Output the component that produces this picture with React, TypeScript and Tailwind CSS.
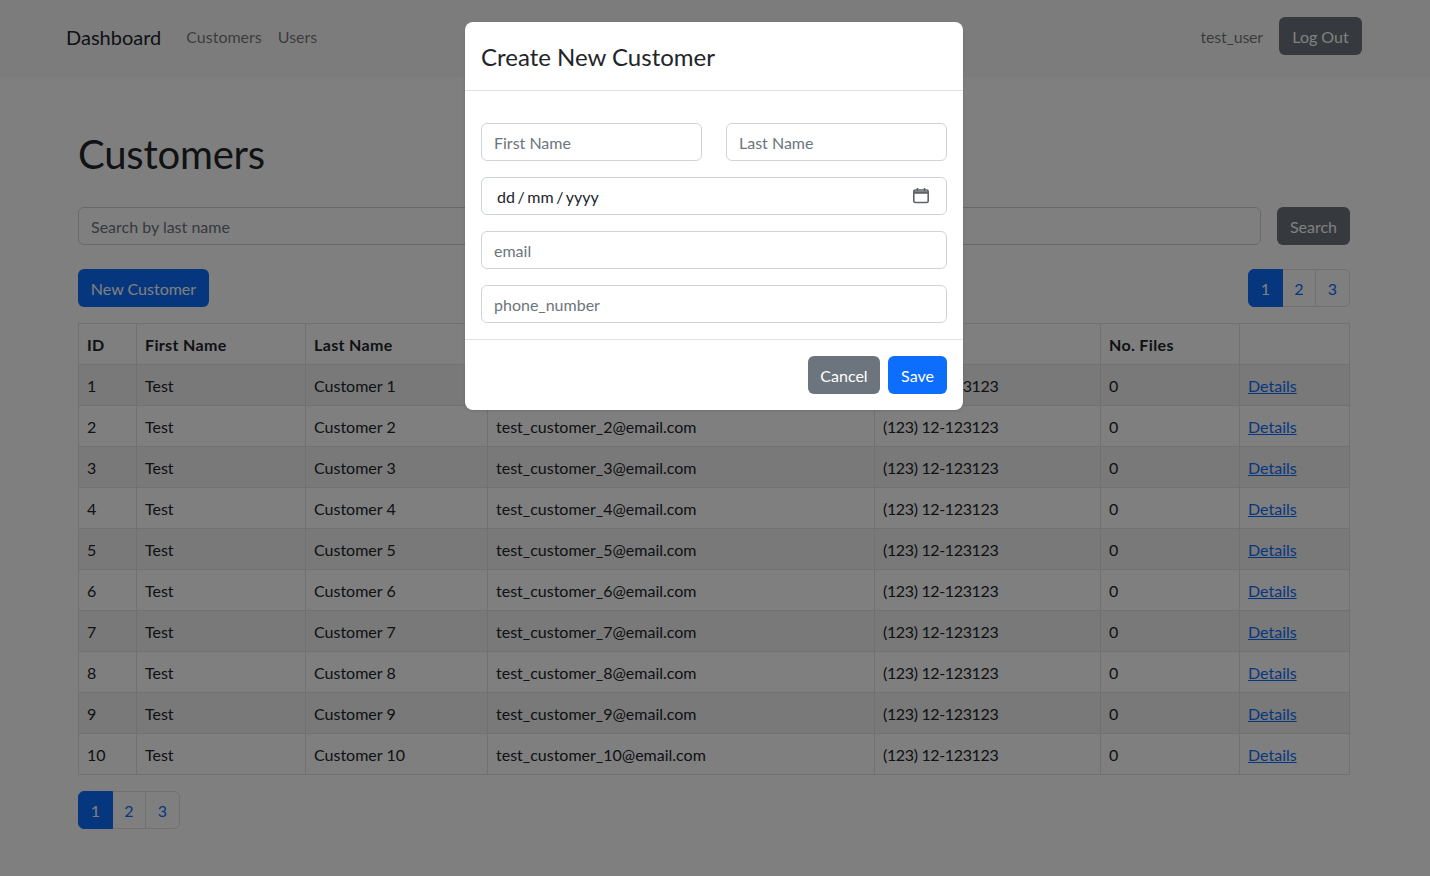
import React from 'react';

const FONT = "font-['Lato','Liberation_Sans',sans-serif]";

const customers = [1, 2, 3, 4, 5, 6, 7, 8, 9, 10];

const Pagination = () => (
  <ul className="flex h-[38px] list-none">
    <li className="flex h-full w-[35px] items-center justify-center rounded-l-md border border-[#0d6efd] bg-[#0d6efd] pt-[2px] text-white">1</li>
    <li className="flex h-full w-[33px] items-center justify-center border border-l-0 border-[#dee2e6] pt-[2px] text-[#0d6efd]">2</li>
    <li className="-ml-px flex h-full w-[35px] items-center justify-center rounded-r-md border border-[#dee2e6] pt-[2px] text-[#0d6efd]">3</li>
  </ul>
);

const Th = ({ w, children }: { w: string; children?: React.ReactNode }) => (
  <th className={`${w} border border-[#dee2e6] px-2 pt-[9px] pb-[7px] text-left font-bold tracking-[0.35px]`}>{children}</th>
);

const Td = ({ children, className = '' }: { children?: React.ReactNode; className?: string }) => (
  <td className={`border border-[#dee2e6] px-2 pt-[9px] pb-[7px] ${className}`}>{children}</td>
);

const Field = ({ placeholder }: { placeholder: string }) => (
  <input
    placeholder={placeholder}
    className="h-[38px] w-full rounded-md border border-[#ced4da] bg-white px-3 text-[#212529] outline-none placeholder:text-[#6c757d]"
  />
);

export default function App() {
  return (
    <div className={`relative h-[876px] overflow-hidden bg-white text-base leading-6 text-[#212529] ${FONT}`}>
      {/* Navbar */}
      <nav className="flex h-[78px] items-start justify-between bg-[#f8f9fa] pt-[17px] pr-[68px] pl-[66px]">
        <div className="flex h-[40px] items-center">
          <span className="mr-[25px] text-xl">Dashboard</span>
          <a className="mr-4 text-black/55">Customers</a>
          <a className="text-black/55">Users</a>
        </div>
        <div className="flex items-center gap-4">
          <span className="pt-[2px] tracking-[-0.2px] text-black/55">test_user</span>
          <button className="h-[38px] w-[83px] rounded-md bg-[#6c757d] pt-[2px] text-white">Log Out</button>
        </div>
      </nav>

      <main className="pr-[80px] pl-[78px]">
        <h1 className="mt-[52px] text-[40px] leading-[48px] font-normal tracking-[-0.2px]">Customers</h1>

        <div className="mt-[29px] flex gap-4">
          <input
            placeholder="Search by last name"
            className="h-[38px] flex-1 rounded-md border border-[#ced4da] px-3 outline-none placeholder:text-[#6c757d]"
          />
          <button className="h-[38px] w-[73px] rounded-md bg-[#6c757d] pt-[2px] text-white">Search</button>
        </div>

        <div className="mt-6 flex justify-between">
          <button className="h-[38px] w-[131px] rounded-md bg-[#0d6efd] pt-[2px] text-white">New Customer</button>
          <Pagination />
        </div>

        <table className="mt-4 w-[1271px] table-fixed border-collapse">
          <thead>
            <tr>
              <Th w="w-[58px]">ID</Th>
              <Th w="w-[169px]">First Name</Th>
              <Th w="w-[182px]">Last Name</Th>
              <Th w="w-[387px]">Email</Th>
              <Th w="w-[226px]">Phone</Th>
              <Th w="w-[139px]">No. Files</Th>
              <Th w="w-[110px]" />
            </tr>
          </thead>
          <tbody>
            {customers.map((n) => (
              <tr key={n} className="odd:bg-black/5">
                <Td>{n}</Td>
                <Td>Test</Td>
                <Td>Customer {n}</Td>
                <Td>test_customer_{n}@email.com</Td>
                <Td className="tracking-[-0.35px]">(123) 12-123123</Td>
                <Td>0</Td>
                <Td>
                  <a className="text-[#0d6efd] underline">Details</a>
                </Td>
              </tr>
            ))}
          </tbody>
        </table>

        <div className="mt-4">
          <Pagination />
        </div>
      </main>

      {/* Modal */}
      <div className="absolute inset-0 flex items-start justify-center bg-black/50 pt-[22px] pr-[2px]">
        <div className="w-[498px] rounded-lg bg-white shadow-sm">
          <div className="flex h-[69px] items-center border-b border-[#dee2e6] px-4 pt-[2px]">
            <h5 className="text-2xl leading-6 font-normal">Create New Customer</h5>
          </div>
          <div className="flex flex-col gap-4 border-b border-[#dee2e6] px-4 pt-8 pb-4">
            <div className="flex gap-6">
              <Field placeholder="First Name" />
              <Field placeholder="Last Name" />
            </div>
            <div className="flex h-[38px] items-center justify-between rounded-md border border-[#ced4da] pr-4 pl-[15px]">
              <span className="pt-[2px] [word-spacing:-1.5px]">dd / mm / yyyy</span>
              <svg width="18" height="18" viewBox="0 0 18 18" fill="none" stroke="#5f6368" strokeWidth="1.6">
                <rect x="1.8" y="3" width="14.4" height="12.5" rx="1.5" />
                <path d="M2 5.5h14" strokeWidth="2.6" />
                <path d="M5.5 1v3M12.5 1v3" />
              </svg>
            </div>
            <Field placeholder="email" />
            <Field placeholder="phone_number" />
          </div>
          <div className="flex h-[70px] items-center justify-end gap-2 px-4">
            <button className="h-[38px] w-[72px] rounded-md bg-[#6c757d] pt-[2px] text-white">Cancel</button>
            <button className="h-[38px] w-[59px] rounded-md bg-[#0d6efd] pt-[2px] text-white">Save</button>
          </div>
        </div>
      </div>
    </div>
  );
}
